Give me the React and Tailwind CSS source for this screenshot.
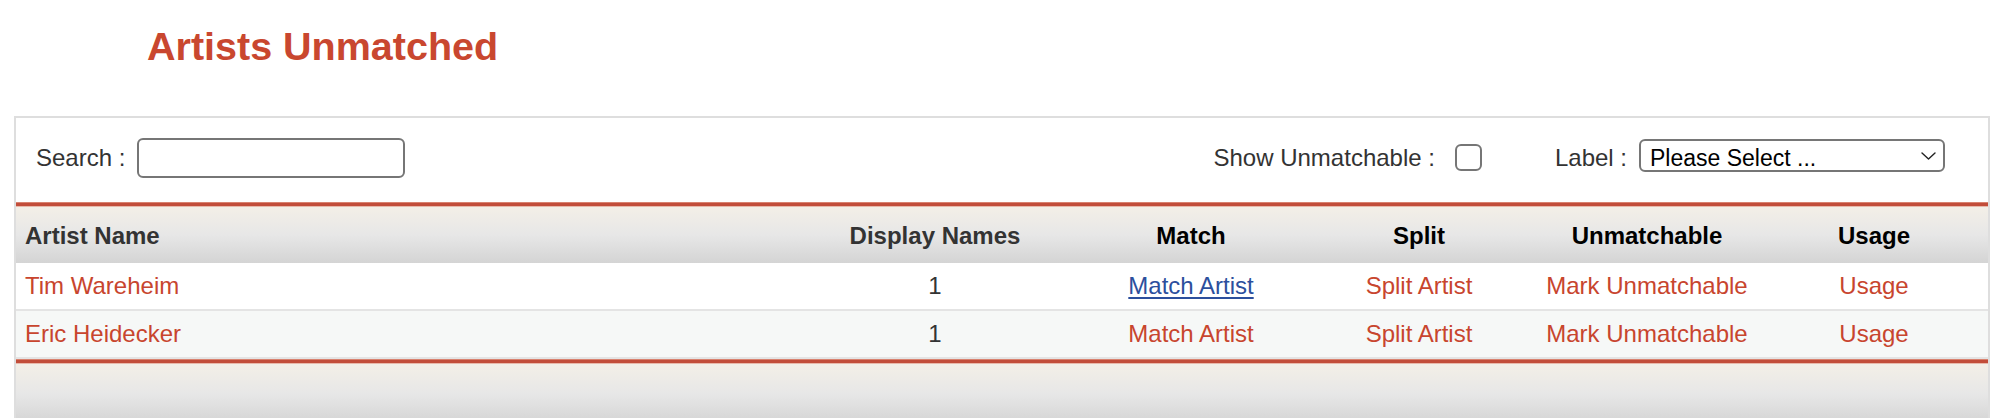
import React from 'react';

const rows = [
  { name: 'Tim Wareheim', displayNames: 1, visited: true },
  { name: 'Eric Heidecker', displayNames: 1, visited: false },
];

const cols = 'grid grid-cols-[776px_286px_226px_230px_226px_228px]';

const RedRule = () => (
  <div className="h-[5px] border-t border-b border-t-[#d8826f] border-b-[#e8b9ab] bg-[#c24d3a]" />
);

const Controls = () => (
  <div className="flex h-[84px] items-center justify-between pb-[4px] pl-[20px] pr-[43px] text-[24px] text-[#333]">
    <div className="flex items-center">
      <span>Search :</span>
      <input
        type="text"
        className="ml-[12px] h-[40px] w-[268px] rounded-[6px] border-2 border-[#767676] bg-white px-2 outline-none"
      />
    </div>
    <div className="flex items-center">
      <span>Show Unmatchable :</span>
      <input
        type="checkbox"
        className="ml-[20px] h-[27px] w-[27px] appearance-none rounded-[6px] border-2 border-[#767676] bg-white"
      />
      <span className="ml-[73px]">Label :</span>
      <div className="relative ml-[12px]">
        <select className="h-[33px] w-[306px] appearance-none rounded-[6px] border-2 border-[#767676] bg-white pl-[9px] text-[23px] text-black outline-none">
          <option>Please Select ...</option>
        </select>
        <svg
          className="pointer-events-none absolute right-[9px] top-[13px]"
          width="15"
          height="8"
          viewBox="0 0 15 8"
          fill="none"
        >
          <path d="M1 1l6.5 6 6.5-6" stroke="#222" strokeWidth="1.4" strokeLinecap="round" strokeLinejoin="round" />
        </svg>
      </div>
    </div>
  </div>
);

const ArtistTable = () => (
  <div>
    <RedRule />
    <div className={`${cols} h-[56px] items-center pt-[3px] bg-linear-to-b from-[#f3efe7] via-[#e7e7e7] to-[#d4d4d4] text-[24px] font-bold`}>
      <div className="pl-[9px] text-[#333]">Artist Name</div>
      <div className="text-center text-[#333]">Display Names</div>
      <div className="text-center text-black">Match</div>
      <div className="text-center text-black">Split</div>
      <div className="text-center text-black">Unmatchable</div>
      <div className="text-center text-black">Usage</div>
    </div>
    {rows.map((row, i) => (
      <div
        key={row.name}
        className={`${cols} h-[48px] items-center pt-[1px] border-b-2 border-[#e4e4e4] text-[24px] ${i % 2 ? 'bg-[#f6f8f7]' : 'bg-white'}`}
      >
        <a href="#" className="pl-[9px] text-[#c8452e]">{row.name}</a>
        <div className="text-center text-[#333]">{row.displayNames}</div>
        <div className="text-center">
          {row.visited ? (
            <a href="#" className="text-[#2c4f9d] underline decoration-2 underline-offset-[3px]">Match Artist</a>
          ) : (
            <a href="#" className="text-[#c8452e]">Match Artist</a>
          )}
        </div>
        <div className="text-center">
          <a href="#" className="text-[#c8452e]">Split Artist</a>
        </div>
        <div className="text-center">
          <a href="#" className="text-[#c8452e]">Mark Unmatchable</a>
        </div>
        <div className="text-center">
          <a href="#" className="text-[#c8452e]">Usage</a>
        </div>
      </div>
    ))}
    <RedRule />
    <div className="h-[60px] bg-linear-to-b from-[#f3efe7] via-[#e7e7e7] to-[#d4d4d4]" />
  </div>
);

export default function App() {
  return (
    <div className="min-h-screen bg-white pt-[27px] font-['Liberation_Sans',Arial,sans-serif]">
      <h1 className="pl-[147px] text-[39.5px] font-bold leading-none text-[#c9472f]">Artists Unmatched</h1>
      <div className="ml-[14px] mt-[49px] w-[1976px] border-2 border-[#dedede]">
        <Controls />
        <ArtistTable />
      </div>
    </div>
  );
}
